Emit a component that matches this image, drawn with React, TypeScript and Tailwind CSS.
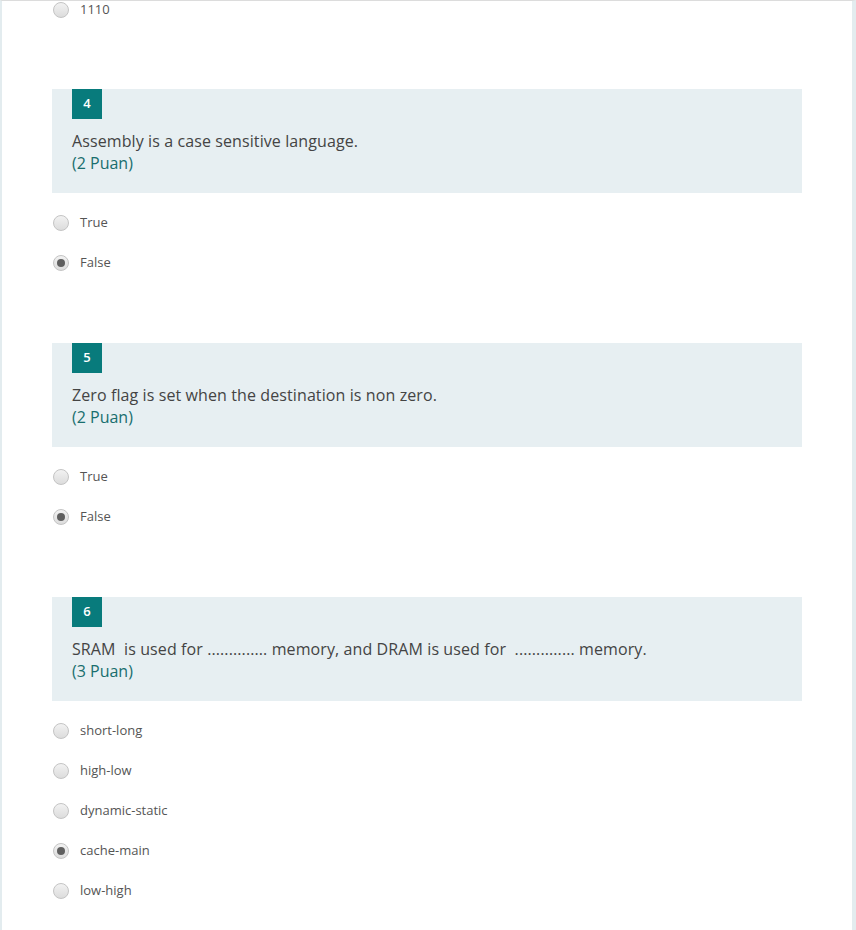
import React from "react";

const font = { fontFamily: '"Open Sans", "Noto Sans", sans-serif' };

function Radio({ checked }: { checked?: boolean }) {
  return (
    <span className="relative flex h-[16px] w-[16px] shrink-0 items-center justify-center rounded-full border border-[#c4c4c4] bg-gradient-to-b from-[#f2f2f2] to-[#dcdcdc]">
      {checked && <span className="h-[8px] w-[8px] rounded-full bg-[#5f5f5f]" />}
    </span>
  );
}

function Option({ label, checked }: { label: string; checked?: boolean }) {
  return (
    <div className="flex h-10 items-center pl-[1px]">
      <Radio checked={checked} />
      <span className="ml-[11px] text-[13px] text-[#555]">{label}</span>
    </div>
  );
}

function Question({
  n,
  text,
  points,
  options,
  checked,
  first,
}: {
  n: number;
  text: string;
  points: number;
  options: string[];
  checked: number;
  first?: boolean;
}) {
  return (
    <div className={first ? "mt-[59px]" : "mt-[60px]"}>
      <div className="w-[750px] bg-[#e7eff2] px-5 pb-[19px]">
        <div className="flex h-[30px] w-[30px] items-center justify-center bg-[#087b7c] text-[13px] font-semibold text-white">
          {n}
        </div>
        <div className="mt-[11px] text-[16px] leading-[22px] tracking-[0.1px] text-[#444] whitespace-pre">{text}</div>
        <div className="text-[16px] leading-[22px] text-[#196e6e]">({points} Puan)</div>
      </div>
      <div className="pt-[10px]">
        {options.map((o, i) => (
          <Option key={o} label={o} checked={i === checked} />
        ))}
      </div>
    </div>
  );
}

export default function App() {
  return (
    <div style={font} className="h-[930px] w-[856px] overflow-hidden bg-white">
      <div className="h-full w-[856px] overflow-hidden border-l-2 border-r-4 border-t border-l-[#e3ecef] border-r-[#e3ecef] border-t-[#dcdcdc] pl-[50px]">
        <div className="-mt-[11px]">
          <Option label="1110" />
        </div>
        <Question
          first
          n={4}
          text="Assembly is a case sensitive language."
          points={2}
          options={["True", "False"]}
          checked={1}
        />
        <Question
          n={5}
          text="Zero flag is set when the destination is non zero."
          points={2}
          options={["True", "False"]}
          checked={1}
        />
        <Question
          n={6}
          text="SRAM  is used for .............. memory, and DRAM is used for  .............. memory."
          points={3}
          options={["short-long", "high-low", "dynamic-static", "cache-main", "low-high"]}
          checked={3}
        />
      </div>
    </div>
  );
}
